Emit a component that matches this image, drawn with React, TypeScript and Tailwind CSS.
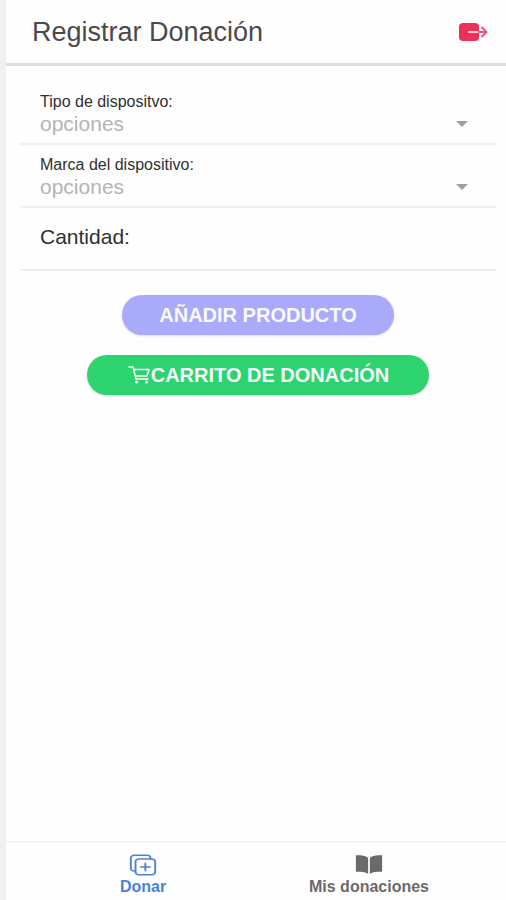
import { useState } from "react";
import { IoBookSharp, IoDuplicateOutline } from "react-icons/io5";

type SelectRowProps = { id: string; label: string; options: string[] };

function SelectRow({ id, label, options }: SelectRowProps) {
  const [value, setValue] = useState("");
  return (
    <div className="flex h-[63px] flex-col border-b-2 border-[#f1f1f1] px-5 pt-[10px]">
      <label htmlFor={id} className="text-base leading-5 text-[#303030]">
        {label}
      </label>
      <div className="flex items-center">
        <select
          id={id}
          value={value}
          onChange={(event) => setValue(event.target.value)}
          className="h-6 min-w-0 flex-1 appearance-none bg-transparent text-[21px] leading-6 text-[#b4b4b4] outline-none"
        >
          <option value="">opciones</option>
          {options.map((option) => (
            <option key={option}>{option}</option>
          ))}
        </select>
        <svg viewBox="0 0 12 6" className="mr-2 h-[6px] w-3 shrink-0" aria-hidden="true">
          <path d="M0 0h12L6 6z" fill="#a0a0a0" />
        </svg>
      </div>
    </div>
  );
}

function ExitIcon() {
  return (
    <svg viewBox="0 0 30 20" className="h-5 w-[30px]" fill="none" aria-hidden="true">
      <rect x="1" y="1" width="20" height="18" rx="4" fill="#ef3159" />
      <path d="M11 10h10" stroke="#ffd3da" strokeWidth="2" strokeLinecap="round" />
      <path
        d="M21 10h7M24 5.5l4.5 4.5-4.5 4.5"
        stroke="#ee5576"
        strokeWidth="2"
        strokeLinecap="round"
        strokeLinejoin="round"
      />
    </svg>
  );
}

function CartIcon() {
  return (
    <svg viewBox="0 0 24 20" className="h-5 w-6" fill="none" aria-hidden="true">
      <path
        d="M2 2h4l3 12h12M6.5 4.500H22L20 11H8.200"
        stroke="white"
        strokeWidth="1.500"
        strokeLinecap="round"
        strokeLinejoin="round"
      />
      <circle cx="9.500" cy="17" r="1.600" fill="white" />
      <circle cx="19.500" cy="17" r="1.600" fill="white" />
    </svg>
  );
}

export default function App() {
  return (
    <div className="flex min-h-screen flex-col border-l-[6px] border-[#f0f0f0] bg-[#fefefe] font-['Liberation_Sans',Arial,sans-serif]">
      <header className="flex h-[66px] items-center justify-between border-b-[3px] border-[#dedede] pr-[18px] pl-[26px]">
        <h1 className="text-[27px] leading-8 text-[#4a4a4a]">Registrar Donación</h1>
        <button type="button" aria-label="Cerrar sesión">
          <ExitIcon />
        </button>
      </header>

      <main className="flex flex-1 flex-col">
        <form className="flex flex-col pt-4 pr-[10px] pl-[14px]">
          <SelectRow id="tipo" label="Tipo de dispositvo:" options={["Computadora", "Celular", "Tablet"]} />
          <SelectRow id="marca" label="Marca del dispositivo:" options={["Samsung", "HP", "Lenovo"]} />
          <div className="flex h-[63px] items-center gap-2 border-b-2 border-[#ececec] px-5 pb-1">
            <label htmlFor="cantidad" className="text-[21px] leading-6 text-[#303030]">
              Cantidad:
            </label>
            <input id="cantidad" inputMode="numeric" className="min-w-0 flex-1 bg-transparent text-[21px] leading-6 outline-none" />
          </div>
          <div className="flex flex-col items-center gap-5 pt-6 text-xl leading-6 font-bold text-[#f8fafc]">
            <button type="button" className="h-10 w-[272px] rounded-full bg-[#aaaafb] shadow-sm">
              AÑADIR PRODUCTO
            </button>
            <button
              type="button"
              className="flex h-10 w-[342px] items-center justify-center rounded-full bg-[#2dd36f] shadow-sm"
            >
              <CartIcon />
              CARRITO DE DONACIÓN
            </button>
          </div>
        </form>
      </main>

      <nav className="grid h-[59px] grid-cols-2 border-t-2 border-[#f3f3f3] px-6 text-base leading-4 font-bold">
        <a href="#donar" className="flex flex-col items-center gap-[2px] pt-[10px] text-[#4a80dc]">
          <IoDuplicateOutline className="h-6 w-[30px]" preserveAspectRatio="none" />
          Donar
        </a>
        <a href="#mis-donaciones" className="flex flex-col items-center gap-[2px] pt-[10px] text-[#6a6a6a]">
          <IoBookSharp className="h-6 w-7" preserveAspectRatio="none" />
          Mis donaciones
        </a>
      </nav>
    </div>
  );
}
